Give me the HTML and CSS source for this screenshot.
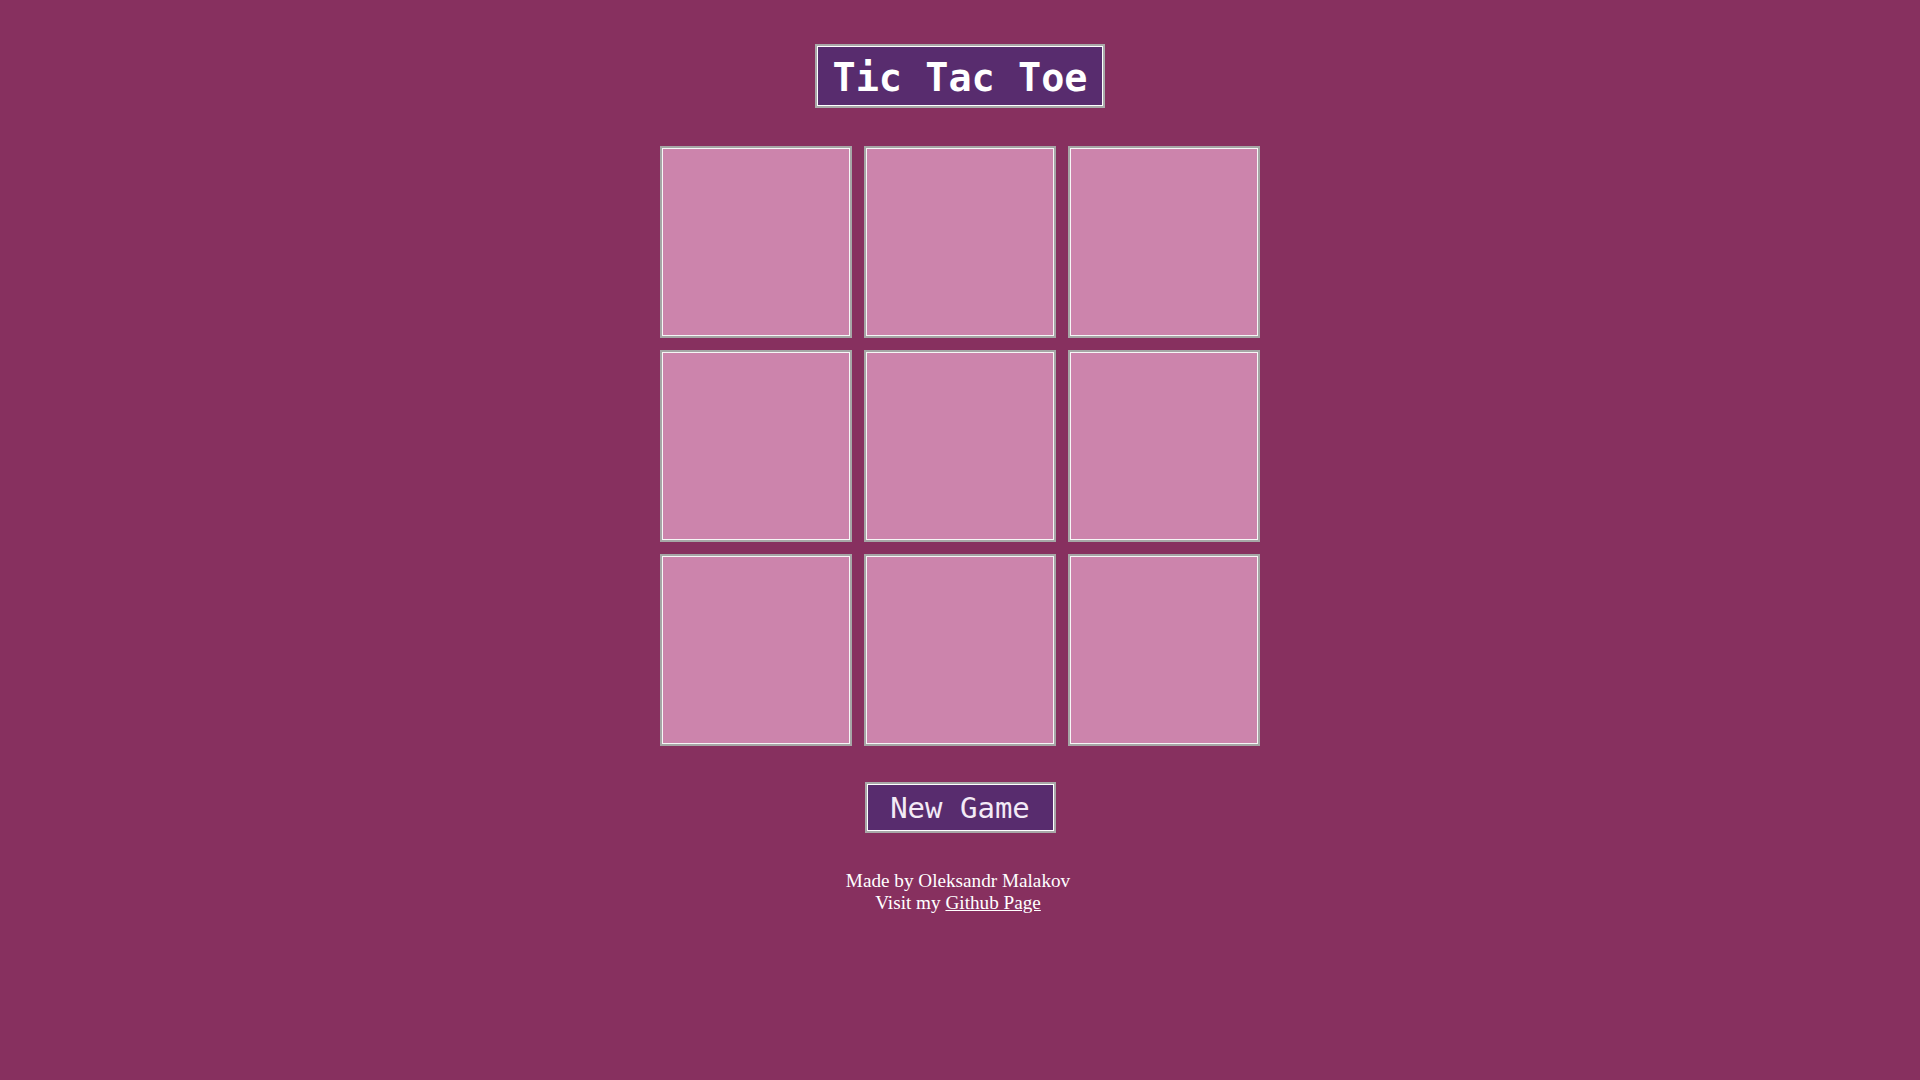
FILE: index.html
```html
<!DOCTYPE html>
<html lang="en">
<head>
<meta charset="utf-8">
<title>Tic Tac Toe</title>
<link rel="stylesheet" href="styles.css">
</head>
<body>
<main class="page">
  <h1 class="title">Tic Tac Toe</h1>
  <div class="board">
    <div class="cell"></div>
    <div class="cell"></div>
    <div class="cell"></div>
    <div class="cell"></div>
    <div class="cell"></div>
    <div class="cell"></div>
    <div class="cell"></div>
    <div class="cell"></div>
    <div class="cell"></div>
  </div>
  <button class="new-game">New Game</button>
  <footer class="footer">
    <div>Made by Oleksandr Malakov</div>
    <div>Visit my <a href="#" class="link">Github Page</a></div>
  </footer>
</main>
</body>
</html>
```
FILE: styles.css
```css
html, body {
  margin: 0;
  padding: 0;
  background: #87305f;
  height: 100%;
}

.page {
  display: flex;
  flex-direction: column;
  align-items: center;
  padding-top: 44px;
  gap: 38px;
}

.title {
  margin: 0;
  box-sizing: border-box;
  height: 64px;
  padding: 5px 16px 0;
  display: flex;
  align-items: center;
  background: #582c6e;
  color: #ffffff;
  font-family: "DejaVu Sans Mono", "Liberation Mono", monospace;
  font-weight: bold;
  font-size: 38.5px;
  line-height: 1;
  border: 2px solid #a9a9a9;
  box-shadow: inset 0 0 0 1px #ffffff;
}

.board {
  display: grid;
  grid-template-columns: repeat(3, 192px);
  grid-template-rows: repeat(3, 192px);
  gap: 12px;
}

.cell {
  box-sizing: border-box;
  background: #cc84ac;
  border: 2px solid #a6a6a6;
  box-shadow: inset 0 0 0 1px #f6f6f6;
}

.new-game {
  box-sizing: border-box;
  width: 191px;
  height: 51px;
  margin-top: -2px;
  padding: 2px 0 0;
  background: #582c6e;
  color: #f3eaf6;
  font-family: "DejaVu Sans Mono", "Liberation Mono", monospace;
  font-size: 29px;
  line-height: 1;
  border: 2px solid #a9a9a9;
  box-shadow: inset 0 0 0 1px #ffffff;
  cursor: pointer;
}

.footer {
  margin-top: -1px;
  padding-right: 4px;
  text-align: center;
  color: #ffffff;
  font-family: "Liberation Serif", "Times New Roman", serif;
  font-size: 19.2px;
  line-height: 22px;
}

.link {
  color: #ffffff;
  text-decoration: underline;
}
```
